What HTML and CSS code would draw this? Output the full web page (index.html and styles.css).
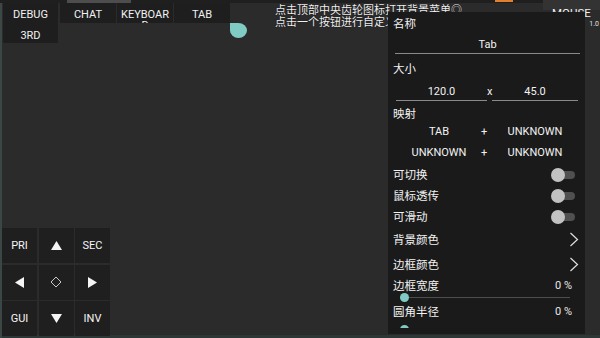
FILE: index.html
```html
<!DOCTYPE html>
<html lang="zh">
<head>
<meta charset="utf-8">
<link rel="stylesheet" href="styles.css">
</head>
<body>
<div class="screen">
  <div class="topbar"><span class="seg-light"></span><span class="seg-orange"></span></div>
  <div class="toolbar">
    <div class="btn-col">
      <div class="btn">DEBUG</div>
      <div class="btn btn-low">3RD</div>
    </div>
    <div class="btn">CHAT</div>
    <div class="btn">KEYBOARD</div>
    <div class="btn">TAB</div>
  </div>
  <div class="handle"></div>
  <div class="hint">点击顶部中央齿轮图标打开背景菜单◎<br>点击一个按钮进行自定义</div>
  <div class="mouse-bg"></div>
  <div class="mouse">MOUSE</div>
  <div class="mouse-sub">1.0</div>

  <div class="dpad">
    <div class="cell">PRI</div>
    <div class="cell"><svg width="11" height="9" viewBox="0 0 11 9"><polygon points="5.5,0 11,9 0,9" fill="#f5f5f5"/></svg></div>
    <div class="cell">SEC</div>
    <div class="cell"><svg width="9" height="11" viewBox="0 0 9 11"><polygon points="0,5.5 9,0 9,11" fill="#f5f5f5"/></svg></div>
    <div class="cell"><svg width="12" height="12" viewBox="0 0 12 12"><polygon points="6,1 11,6 6,11 1,6" fill="none" stroke="#c8c8c8" stroke-width="1"/></svg></div>
    <div class="cell"><svg width="9" height="11" viewBox="0 0 9 11"><polygon points="9,5.5 0,0 0,11" fill="#f5f5f5"/></svg></div>
    <div class="cell">GUI</div>
    <div class="cell"><svg width="11" height="9" viewBox="0 0 11 9"><polygon points="0,0 11,0 5.5,9" fill="#f5f5f5"/></svg></div>
    <div class="cell">INV</div>
  </div>

  <div class="panel">
    <div class="panel-body">
      <div class="lbl lbl-name">名称</div>
      <div class="field field-wide">Tab</div>
      <div class="lbl lbl-size">大小</div>
      <div class="size-row">
        <div class="field f1">120.0</div>
        <span class="times">x</span>
        <div class="field f2">45.0</div>
      </div>
      <div class="lbl lbl-map">映射</div>
      <div class="map">
        <span>TAB</span><span>+</span><span>UNKNOWN</span>
        <span>UNKNOWN</span><span>+</span><span>UNKNOWN</span>
      </div>
      <div class="opt opt-toggle"><span>可切换</span><span class="switch"><span class="track"></span><span class="thumb"></span></span></div>
      <div class="opt opt-toggle"><span>鼠标透传</span><span class="switch"><span class="track"></span><span class="thumb"></span></span></div>
      <div class="opt opt-toggle"><span>可滑动</span><span class="switch"><span class="track"></span><span class="thumb"></span></span></div>
      <div class="opt opt-nav"><span>背景颜色</span><svg class="chev" width="10" height="15" viewBox="0 0 10 15"><polyline points="1.5,1 8.5,7.5 1.5,14" fill="none" stroke="#e0e0e0" stroke-width="1.2"/></svg></div>
      <div class="opt opt-nav"><span>边框颜色</span><svg class="chev" width="10" height="15" viewBox="0 0 10 15"><polyline points="1.5,1 8.5,7.5 1.5,14" fill="none" stroke="#e0e0e0" stroke-width="1.2"/></svg></div>
      <div class="opt opt-value"><span>边框宽度</span><span class="val">0 %</span></div>
      <div class="slider"><span class="strack"></span><span class="knob"></span></div>
      <div class="opt opt-value opt-tall"><span>圆角半径</span><span class="val">0 %</span></div>
      <div class="slider slider-next"><span class="strack"></span><span class="knob"></span></div>
    </div>
  </div>
</div>
</body>
</html>
```

FILE: styles.css
```css
* { box-sizing: border-box; margin: 0; padding: 0; }

body {
  margin: 0;
  background: #2b2b2b;
  font-family: Roboto, "Noto Sans CJK SC", sans-serif;
  font-size: 11px;
  color: #f2f2f2;
}

.screen {
  position: relative;
  width: 600px;
  height: 338px;
  overflow: hidden;
  background: #2b2b2b;
  box-shadow: inset 2px 0 0 #3a4745, inset 0 -3px 0 #2d3735;
}

.topbar {
  display: flex;
  height: 3px;
  background: #1f1f1f;
}
.seg-light { margin-left: 67px; width: 64px; height: 3px; background: #4d4d4d; }
.seg-orange { margin-left: 364px; width: 18px; height: 2px; background: #e3802f; }

.toolbar {
  display: flex;
  align-items: flex-start;
  gap: 1px;
  padding-left: 3px;
}
.btn-col {
  width: 55px;
  margin-right: 1px;
  background: #1e1e1e;
}
.btn {
  width: 56px;
  height: 20px;
  padding: 5.5px 3px 0;
  background: #1e1e1e;
  text-align: center;
  line-height: 11px;
  overflow: hidden;
  word-break: break-all;
}
.btn-col .btn { width: 55px; }
.btn-col .btn-low { padding-top: 6.5px; }

.handle {
  position: absolute;
  left: 230px;
  top: 23px;
  width: 17px;
  height: 15px;
  background: #80cbc4;
  border-radius: 0 50% 50% 50%;
}

.hint {
  position: absolute;
  left: 275px;
  top: 4.5px;
  font-size: 11px;
  line-height: 12.5px;
  color: #f0f0f0;
  white-space: nowrap;
  text-shadow: 0 0 1px #000;
}

.mouse-bg {
  position: absolute;
  left: 543px;
  top: 0;
  width: 57px;
  height: 10px;
  background: #333333;
}
.mouse {
  position: absolute;
  left: 552px;
  top: 7px;
  font-size: 11.5px;
  line-height: 12px;
  color: #f0f0f0;
}
.mouse-sub {
  position: absolute;
  right: 1px;
  top: 20px;
  font-size: 7px;
  line-height: 8px;
  color: #e0e0e0;
}

.dpad {
  position: absolute;
  left: 2px;
  top: 228px;
  display: grid;
  grid-template-columns: repeat(3, 35px);
  grid-template-rows: repeat(3, 35px);
  gap: 1.5px;
}
.cell {
  display: flex;
  align-items: center;
  justify-content: center;
  background: #1f1f1f;
  font-size: 11px;
  color: #f5f5f5;
}

.panel {
  position: absolute;
  left: 388px;
  top: 12px;
  width: 197px;
  height: 322px;
  padding-bottom: 6px;
  background: #1a1a1a;
}
.panel-body {
  height: 100%;
  overflow: hidden;
}

.lbl {
  padding-left: 5px;
  font-size: 11.5px;
}
.lbl-name { padding-top: 1px; line-height: 22px; }
.lbl-size { padding-top: 3px; line-height: 25px; }
.lbl-map { padding-top: 6px; line-height: 14px; }

.field {
  text-align: center;
  border-bottom: 1px solid #8a8a8a;
}
.field-wide {
  margin-left: 7px;
  width: 185px;
  padding-top: 2px;
  line-height: 16px;
}

.size-row {
  display: flex;
  margin-left: 8px;
}
.size-row .field {
  padding-top: 1px;
  line-height: 17px;
}
.f1 { width: 91px; }
.f2 { width: 86px; }
.times {
  width: 5px;
  padding-top: 1px;
  line-height: 17px;
  text-align: center;
}

.map {
  display: grid;
  grid-template-columns: 82px 8px 94px;
  grid-template-rows: 21px 22px;
  margin-left: 10px;
  text-align: center;
  line-height: 21px;
}

.opt {
  display: flex;
  align-items: center;
  justify-content: space-between;
  padding-left: 5px;
  font-size: 11.5px;
  line-height: 16px;
}
.opt-toggle { height: 21px; }
.opt-nav { height: 25px; }
.opt-value { height: 17px; }
.opt-tall { height: 24px; }

.switch {
  position: relative;
  width: 24px;
  height: 14px;
  margin-right: 10px;
}
.switch .track {
  position: absolute;
  left: 2px;
  top: 3px;
  width: 22px;
  height: 8px;
  border-radius: 4px;
  background: #505050;
}
.switch .thumb {
  position: absolute;
  left: 0;
  top: 0;
  width: 14px;
  height: 14px;
  border-radius: 50%;
  background: #c2c2c2;
}

.chev { margin-right: 6px; }

.val {
  margin-right: 13px;
  font-size: 11px;
  color: #e8e8e8;
}

.slider {
  position: relative;
  height: 6px;
  margin: 0 15px 0 12px;
}
.slider-next { margin-top: 2.5px; }
.strack {
  position: absolute;
  left: 0;
  right: 0;
  top: 2.5px;
  height: 1px;
  background: #4d4d4d;
}
.knob {
  position: absolute;
  left: 0;
  top: -1.5px;
  width: 9px;
  height: 9px;
  border-radius: 50%;
  background: #80cbc4;
}
```
